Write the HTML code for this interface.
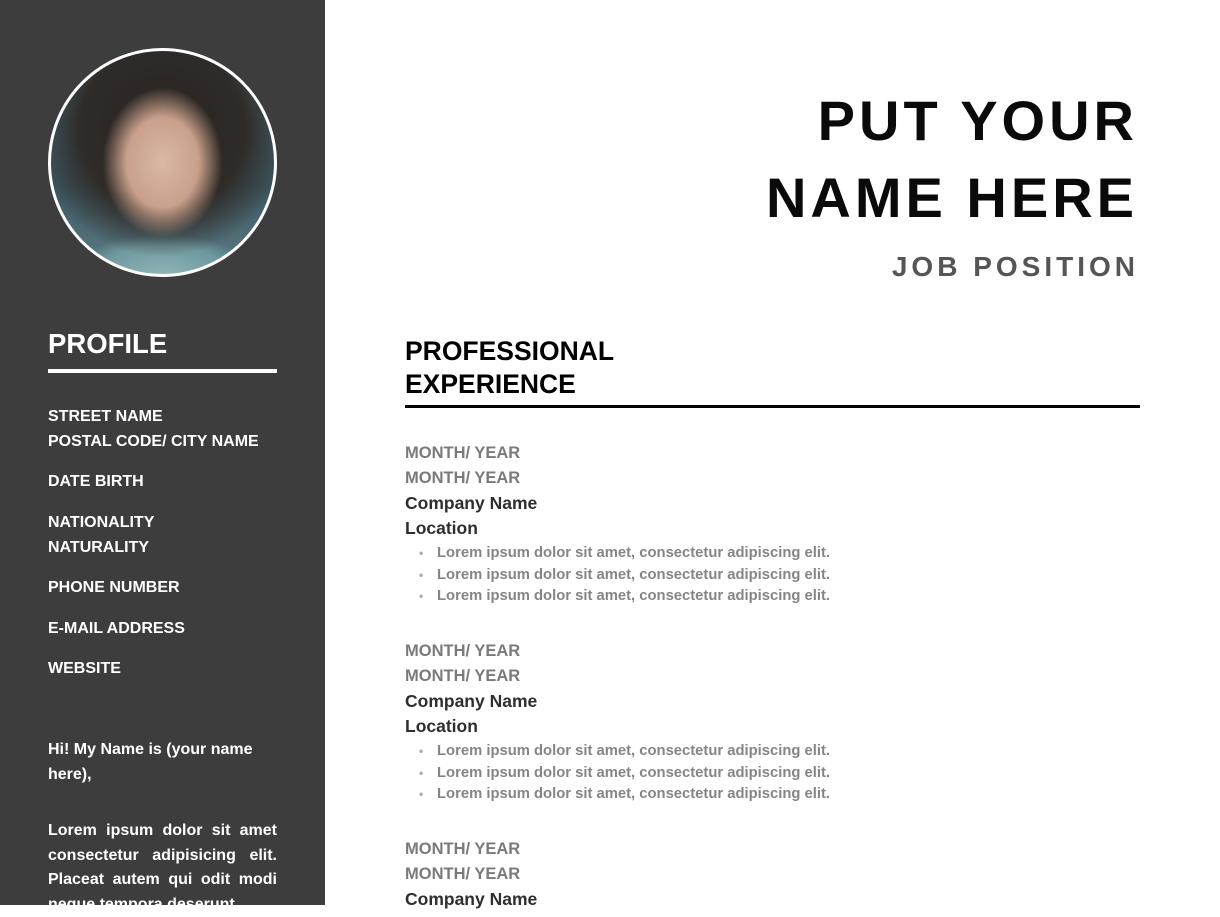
<!DOCTYPE html>
<html><head><meta charset="utf-8"><style>
*{margin:0;padding:0;box-sizing:border-box}
body{width:1220px;height:905px;overflow:hidden;background:#fff;font-family:"Liberation Sans",Arial,sans-serif;font-weight:bold;position:relative}
.side{position:absolute;left:0;top:0;width:325px;height:905px;background:#3d3d3d;color:#fff}
.a{position:absolute;white-space:nowrap}
.photo{position:absolute;left:48px;top:48px;width:229px;height:229px;border-radius:50%;border:3px solid #fff;overflow:hidden;
background:radial-gradient(ellipse 60px 75px at 50% 50%,#d9b9a5 0,#c9a08b 60%,rgba(0,0,0,0) 100%),radial-gradient(circle at 50% 35%,#2a2420 0,#2f2b28 45%,rgba(0,0,0,0) 70%),radial-gradient(ellipse 90px 40px at 50% 100%,#8fb3b8 0,#6f9aa0 70%,rgba(0,0,0,0) 100%),linear-gradient(180deg,#4f6a72,#3c5660 60%,#5e7d86)}
.si{font-size:16px;line-height:24.5px}
.exp .d{color:#7a7a7a;font-size:16.5px;line-height:25px}
.exp .c{color:#2e2e2e;font-size:17.5px;line-height:25px}
.exp ul{list-style:none;margin-top:2px}
.exp li{color:#858585;font-size:14.8px;line-height:21.5px;position:relative;padding-left:32px}
.exp li:before{content:"•";position:absolute;left:14px;color:#aaa;font-size:12px}
</style></head><body>
<div class="side">
<div class="photo"></div>
<div class="a" style="left:48px;top:328px;font-size:27.5px">PROFILE</div>
<div class="a" style="left:48px;top:369px;width:229px;height:4px;background:#fff"></div>
<div class="a si" style="left:48px;top:405px">STREET NAME<br>POSTAL CODE/ CITY NAME</div>
<div class="a si" style="left:48px;top:470px">DATE BIRTH</div>
<div class="a si" style="left:48px;top:511px">NATIONALITY<br>NATURALITY</div>
<div class="a si" style="left:48px;top:576px">PHONE NUMBER</div>
<div class="a si" style="left:48px;top:617px">E-MAIL ADDRESS</div>
<div class="a si" style="left:48px;top:657px">WEBSITE</div>
<div class="a si" style="left:48px;top:738px;white-space:normal;width:229px">Hi! My Name is (your name here),</div>
<div class="a si" style="left:48px;top:819px;white-space:normal;width:229px;text-align:justify">Lorem ipsum dolor sit amet consectetur adipisicing elit. Placeat autem qui odit modi neque tempora deserunt</div>
</div>
<div class="a" style="right:82px;top:82px;text-align:right;font-size:56px;line-height:77px;letter-spacing:4px;color:#0a0a0a">PUT YOUR<br>NAME HERE</div>
<div class="a" style="right:81px;top:251px;font-size:28px;letter-spacing:4px;color:#555">JOB POSITION</div>
<div class="a" style="left:405px;top:335px;font-size:26.5px;line-height:33px;color:#000">PROFESSIONAL<br>EXPERIENCE</div>
<div class="a" style="left:405px;top:405px;width:735px;height:3px;background:#000"></div>
<div class="a exp" style="left:405px;top:441px">
<div class="d">MONTH/ YEAR</div><div class="d">MONTH/ YEAR</div><div class="c">Company Name</div><div class="c">Location</div>
<ul><li>Lorem ipsum dolor sit amet, consectetur adipiscing elit.</li><li>Lorem ipsum dolor sit amet, consectetur adipiscing elit.</li><li>Lorem ipsum dolor sit amet, consectetur adipiscing elit.</li></ul></div>
<div class="a exp" style="left:405px;top:639px">
<div class="d">MONTH/ YEAR</div><div class="d">MONTH/ YEAR</div><div class="c">Company Name</div><div class="c">Location</div>
<ul><li>Lorem ipsum dolor sit amet, consectetur adipiscing elit.</li><li>Lorem ipsum dolor sit amet, consectetur adipiscing elit.</li><li>Lorem ipsum dolor sit amet, consectetur adipiscing elit.</li></ul></div>
<div class="a exp" style="left:405px;top:837px">
<div class="d">MONTH/ YEAR</div><div class="d">MONTH/ YEAR</div><div class="c">Company Name</div></div>
</body></html>
